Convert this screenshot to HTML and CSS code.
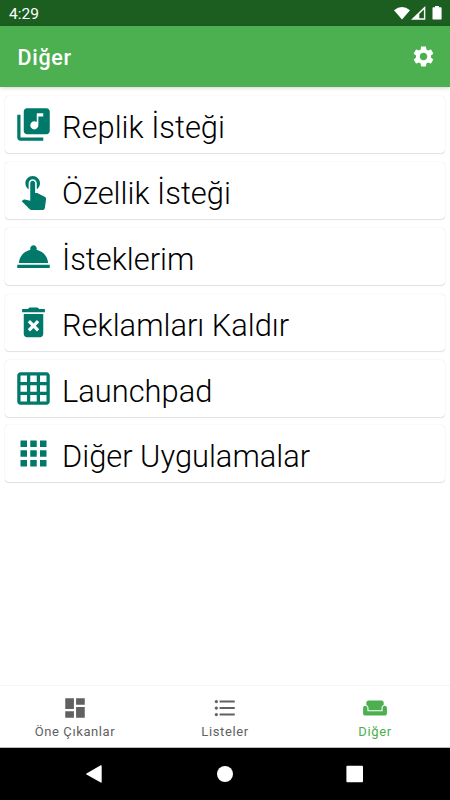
FILE: index.html
```html
<!DOCTYPE html>
<html lang="tr">
<head>
<meta charset="utf-8">
<title>Diğer</title>
<link rel="stylesheet" href="styles.css">
</head>
<body>
<div class="screen">
  <div class="status">
    <span class="time">4:29</span>
    <svg class="status-icons" width="50" height="16" viewBox="0 0 50 16" fill="#fff">
      <path d="M0 4.200Q8 -2.200 16 4.200L8 13.400z"/>
      <path fill-rule="evenodd" d="M31.300 0v13.700H17zM29.900 3.600L25.300 8V12.300H29.900z"/>
      <path d="M41 1.200V0h4v1.200h1.700q.9 0 .9.900v10.600q0 .9-.9.900h-7.300q-.9 0-.9-.9V2.100q0-.9.9-.9z"/>
    </svg>
  </div>
  <header class="appbar">
    <h1>Diğer</h1>
    <svg class="gear" viewBox="0 0 24 24"><path d="M19.14 12.94c.04-.3.06-.61.06-.94 0-.32-.02-.64-.07-.94l2.03-1.58c.18-.14.23-.41.12-.61l-1.92-3.32c-.12-.22-.37-.29-.59-.22l-2.39.96c-.5-.38-1.03-.7-1.62-.94l-.36-2.54c-.04-.24-.24-.41-.48-.41h-3.84c-.24 0-.43.17-.47.41l-.36 2.54c-.59.24-1.13.57-1.62.94l-2.39-.96c-.22-.08-.47 0-.59.22L2.74 8.87c-.12.21-.08.47.12.61l2.03 1.58c-.05.3-.09.63-.09.94s.02.64.07.94l-2.03 1.58c-.18.14-.23.41-.12.61l1.92 3.32c.12.22.37.29.59.22l2.39-.96c.5.38 1.03.7 1.62.94l.36 2.54c.05.24.24.41.48.41h3.84c.24 0 .44-.17.47-.41l.36-2.54c.59-.24 1.13-.56 1.62-.94l2.39.96c.22.08.47 0 .59-.22l1.92-3.32c.12-.22.07-.47-.12-.61l-2.01-1.58zM12 15.6c-1.98 0-3.6-1.62-3.6-3.6s1.62-3.6 3.6-3.6 3.6 1.62 3.6 3.6-1.62 3.6-3.6 3.6z"/></svg>
  </header>
  <main class="list">
    <div class="card"><svg viewBox="0 0 24 24"><path d="M20 2H8c-1.100 0-2 .9-2 2v12c0 1.100.9 2 2 2h12c1.100 0 2-.9 2-2V4c0-1.100-.9-2-2-2zm-2 5h-3v5.500c0 1.380-1.120 2.500-2.500 2.500S10 13.880 10 12.500s1.120-2.500 2.500-2.500c.57 0 1.080.19 1.500.51V5h4v2zM4 6H2v14c0 1.100.9 2 2 2h14v-2H4V6z"/></svg><span>Replik İsteği</span></div>
    <div class="card"><svg viewBox="0 0 24 24"><path d="M9 11.240V7.500C9 6.120 10.120 5 11.500 5S14 6.120 14 7.500v3.740c1.210-.81 2-2.180 2-3.740C16 5.010 13.990 3 11.500 3S7 5.010 7 7.500c0 1.560.79 2.930 2 3.740zm9.840 4.630l-4.540-2.260c-.17-.07-.35-.11-.54-.11H13v-6c0-.83-.67-1.500-1.500-1.500S10 6.670 10 7.500v10.740l-3.430-.72c-.08-.01-.15-.03-.24-.03-.31 0-.59.13-.79.33l-.79.8 4.940 4.940c.27.27.65.44 1.060.44h6.790c.75 0 1.330-.55 1.440-1.280l.75-5.270c.01-.07.02-.14.02-.2 0-.62-.38-1.160-.91-1.380z"/></svg><span>Özellik İsteği</span></div>
    <div class="card"><svg viewBox="0 0 24 24"><path d="M2 17h20v2H2zm11.840-9.210c.1-.24.16-.51.16-.79 0-1.100-.9-2-2-2s-2 .9-2 2c0 .28.060.55.160.79C6.250 8.600 3.270 11.930 3 16h18c-.27-4.070-3.250-7.400-7.160-8.210z"/></svg><span>İsteklerim</span></div>
    <div class="card"><svg viewBox="0 0 24 24"><path fill-rule="evenodd" d="M15.500 3.700h3.500v2H5v-2h3.500l1-1h5zM6 6.700h12v12.300c0 1.100-.9 2-2 2H8c-1.100 0-2-.9-2-2zM8.460 11.880l2.130 2.120-2.120 2.120 1.410 1.410L12 15.410l2.120 2.120 1.410-1.410L13.410 14l2.120-2.120-1.410-1.410L12 12.590l-2.120-2.120z"/></svg><span>Reklamları Kaldır</span></div>
    <div class="card"><svg viewBox="0 0 24 24"><path d="M20 2H4c-1.100 0-2 .9-2 2v16c0 1.100.9 2 2 2h16c1.100 0 2-.9 2-2V4c0-1.100-.9-2-2-2zM8 20H4v-4h4v4zm0-6H4v-4h4v4zm0-6H4V4h4v4zm6 12h-4v-4h4v4zm0-6h-4v-4h4v4zm0-6h-4V4h4v4zm6 12h-4v-4h4v4zm0-6h-4v-4h4v4zm0-6h-4V4h4v4z"/></svg><span>Launchpad</span></div>
    <div class="card"><svg viewBox="0 0 24 24"><path d="M4 8h4V4H4v4zm6 12h4v-4h-4v4zm-6 0h4v-4H4v4zm0-6h4v-4H4v4zm6 0h4v-4h-4v4zm6-10v4h4V4h-4zm-6 4h4V4h-4v4zm6 6h4v-4h-4v4zm0 6h4v-4h-4v4z"/></svg><span>Diğer Uygulamalar</span></div>
  </main>
  <nav class="tabs">
    <div class="tab"><svg viewBox="0 0 24 24"><path d="M3 13h8V3H3v10zm0 8h8v-6H3v6zm10 0h8V11h-8v10zm0-18v6h8V3h-8z"/></svg><span>Öne Çıkanlar</span></div>
    <div class="tab"><svg viewBox="0 0 24 24"><path d="M4 10.500c-.83 0-1.500.67-1.500 1.500s.67 1.500 1.500 1.500 1.500-.67 1.500-1.500-.67-1.500-1.500-1.500zm0-6c-.83 0-1.500.67-1.500 1.500S3.170 7.500 4 7.500 5.500 6.830 5.500 6 4.830 4.500 4 4.500zm0 12c-.83 0-1.500.68-1.500 1.500s.68 1.500 1.500 1.500 1.500-.68 1.500-1.500-.67-1.500-1.500-1.500zM7 19h14v-2H7v2zm0-6h14v-2H7v2zm0-8v2h14V5H7z"/></svg><span>Listeler</span></div>
    <div class="tab active"><svg viewBox="0 0 24 24"><path d="M21 10c-1.100 0-2 .9-2 2v3H5v-3c0-1.100-.9-2-2-2s-2 .9-2 2v5c0 1.100.9 2 2 2h18c1.100 0 2-.9 2-2v-5c0-1.100-.9-2-2-2zm-3-5H6c-1.100 0-2 .9-2 2v2.150c1.160.41 2 1.510 2 2.820V14h12v-2.030c0-1.300.84-2.400 2-2.820V7c0-1.100-.9-2-2-2z"/></svg><span>Diğer</span></div>
  </nav>
  <div class="sysnav">
    <svg viewBox="0 0 18 18"><path d="M.5 8.400L14.700.2Q15.700 0 15.700 1V17Q15.700 18 14.700 17.600L.5 9.400Q-.1 8.900.5 8.400z"/></svg>
    <svg viewBox="0 0 18 18"><circle cx="9" cy="9" r="8"/></svg>
    <svg viewBox="0 0 18 18"><rect x=".4" y=".7" width="16.600" height="16.600" rx="1"/></svg>
  </div>
</div>
</body>
</html>
```

FILE: styles.css
```css
* { box-sizing: border-box; }
body { margin: 0; font-family: Roboto, sans-serif; }
.screen { width: 450px; height: 800px; display: flex; flex-direction: column; background: #fff; overflow: hidden; }
.status { height: 26px; flex: none; background: #1b5e20; color: #fff; display: flex; justify-content: space-between; padding: 0 6px 0 9px; }
.time { font-size: 15.5px; line-height: 28px; }
.status-icons { display: block; margin: 6px 0 0; }
.appbar { height: 61px; flex: none; background: #4caf50; color: #fff; display: flex; align-items: center; justify-content: space-between; padding: 0 14px 0 17.5px; box-shadow: 0 1px 4px rgba(0,0,0,.18); }
h1 { margin: 3px 0 0; font-size: 21.5px; line-height: 26px; font-weight: 500; letter-spacing: .7px; }
.gear { width: 25px; height: 25px; fill: #fff; }
.list { flex: 1; padding: 9px 5px 0; display: flex; flex-direction: column; gap: 8.9px; }
.card { height: 57px; flex: none; display: flex; align-items: center; gap: 9px; padding: 0 9px; border-radius: 4px; background: #fff; box-shadow: 0 0 1px rgba(0,0,0,.2), 0 1px 1px rgba(0,0,0,.1); }
.card svg { width: 39px; height: 39px; fill: #00796b; }
.card span { font-size: 30.85px; line-height: 40px; font-weight: 300; color: #000; padding-top: 7px; white-space: nowrap; }
.tabs { height: 63px; flex: none; display: flex; border-top: 1px solid #f5f5f5; border-bottom: 1px solid #bbb; }
.tab { flex: 1; display: flex; flex-direction: column; align-items: center; padding-top: 9px; color: #616161; fill: #616161; }
.tab svg { width: 26px; height: 26px; }
.tab span { font-size: 13px; line-height: 16px; margin-top: 3px; letter-spacing: .6px; }
.active { color: #4caf50; fill: #4caf50; }
.sysnav { height: 52px; flex: none; background: #000; display: flex; justify-content: space-between; align-items: center; padding: 0 86px; }
.sysnav svg { width: 18px; height: 18px; fill: #fff; }
```
